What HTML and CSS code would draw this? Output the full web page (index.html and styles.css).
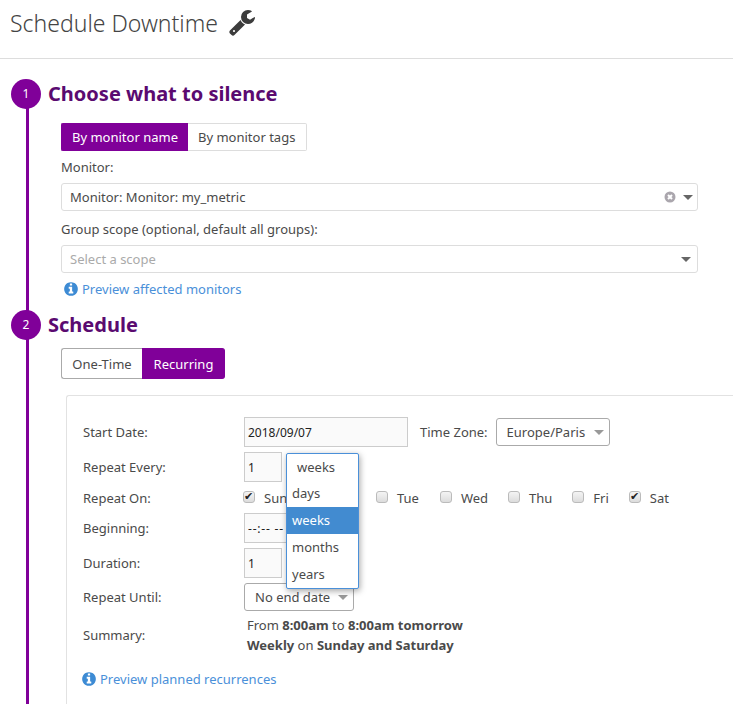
FILE: index.html

```html
<!DOCTYPE html>
<html lang="en">
<head>
  <meta charset="UTF-8" />
  <title>Schedule Downtime</title>
  <link rel="stylesheet" href="styles.css">
</head>
<body>
<div class="page">
  <header class="top">
    <h1>Schedule Downtime</h1>
    <svg class="wrench" viewBox="0 0 1792 1792"><path d="M448 1472q0-26-19-45t-45-19-45 19-19 45 19 45 45 19 45-19 19-45zm644-420l-682 682q-37 37-90 37-52 0-91-37l-106-108q-38-36-38-90 0-53 38-91l681-681q39 98 114.5 173.5t173.5 114.5zm634-435q0 39-23 106-47 134-164.5 217.5t-258.5 83.5q-185 0-316.5-131.5t-131.5-316.5 131.5-316.5 316.5-131.5q58 0 121.5 16.5t107.5 46.5q16 11 16 28t-16 28l-293 169v224l193 107q5-3 79-48.5t135.5-81 70.5-35.5q15 0 23.5 10t8.5 25z"/></svg>
  </header>

  <main class="steps">
    <div class="rail"></div>

    <section class="step">
      <div class="step-head">
        <span class="num">1</span>
        <h2>Choose what to silence</h2>
      </div>
      <div class="step-body">
        <div class="toggle light">
          <button class="on">By monitor name</button>
          <button>By monitor tags</button>
        </div>
        <label class="field-label first">Monitor:</label>
        <div class="combo">
          <span>Monitor: Monitor: my_metric</span>
          <svg class="clear" viewBox="0 0 12 12"><circle cx="6" cy="6" r="5.5"/><path d="M4 4l4 4M8 4l-4 4"/></svg>
          <i class="caret dark"></i>
        </div>
        <label class="field-label">Group scope (optional, default all groups):</label>
        <div class="combo">
          <span class="placeholder">Select a scope</span>
          <i class="caret dark"></i>
        </div>
        <a class="preview nudge">
          <svg class="info" viewBox="0 0 1792 1792"><path d="M1152 1376v-160q0-14-9-23t-23-9h-96v-512q0-14-9-23t-23-9h-320q-14 0-23 9t-9 23v160q0 14 9 23t23 9h96v320h-96q-14 0-23 9t-9 23v160q0 14 9 23t23 9h448q14 0 23-9t9-23zm-128-896v-160q0-14-9-23t-23-9h-192q-14 0-23 9t-9 23v160q0 14 9 23t23 9h192q14 0 23-9t9-23zm640 416q0 209-103 385.5t-279.5 279.5-385.5 103-385.5-103-279.5-279.5-103-385.5 103-385.5 279.5-279.5 385.5-103 385.5 103 279.5 279.5 103 385.5z"/></svg>
          Preview affected monitors
        </a>
      </div>
    </section>

    <section class="step second">
      <div class="step-head">
        <span class="num">2</span>
        <h2>Schedule</h2>
      </div>
      <div class="step-body">
        <div class="toggle dark-edge">
          <button>One-Time</button>
          <button class="on">Recurring</button>
        </div>

        <div class="panel">
          <div class="row r-date">
            <label>Start Date:</label>
            <input class="txt date" type="text" value="2018/09/07">
            <label class="tz-label">Time Zone:</label>
            <div class="pick tz">Europe/Paris<i class="caret"></i></div>
          </div>
          <div class="row r-every">
            <label>Repeat Every:</label>
            <input class="txt small" type="text" value="1">
          </div>
          <div class="row r-days">
            <label>Repeat On:</label>
            <div class="days">
              <label class="day"><input type="checkbox" checked>Sun</label>
              <label class="day"><input type="checkbox">Mon</label>
              <label class="day"><input type="checkbox">Tue</label>
              <label class="day"><input type="checkbox">Wed</label>
              <label class="day"><input type="checkbox">Thu</label>
              <label class="day"><input type="checkbox">Fri</label>
              <label class="day"><input type="checkbox" checked>Sat</label>
            </div>
          </div>
          <div class="row">
            <label>Beginning:</label>
            <input class="txt time" type="text" value="--:-- --">
          </div>
          <div class="row">
            <label>Duration:</label>
            <input class="txt small" type="text" value="1">
          </div>
          <div class="row r-until">
            <label>Repeat Until:</label>
            <div class="pick until">No end date<i class="caret"></i></div>
          </div>
          <div class="row r-summary">
            <label>Summary:</label>
            <p>From <b>8:00am</b> to <b>8:00am tomorrow</b><br><b>Weekly</b> on <b>Sunday and Saturday</b></p>
          </div>
          <a class="preview planned">
            <svg class="info" viewBox="0 0 1792 1792"><path d="M1152 1376v-160q0-14-9-23t-23-9h-96v-512q0-14-9-23t-23-9h-320q-14 0-23 9t-9 23v160q0 14 9 23t23 9h96v320h-96q-14 0-23 9t-9 23v160q0 14 9 23t23 9h448q14 0 23-9t9-23zm-128-896v-160q0-14-9-23t-23-9h-192q-14 0-23 9t-9 23v160q0 14 9 23t23 9h192q14 0 23-9t9-23zm640 416q0 209-103 385.5t-279.5 279.5-385.5 103-385.5-103-279.5-279.5-103-385.5 103-385.5 279.5-279.5 385.5-103 385.5 103 279.5 279.5 103 385.5z"/></svg>
            Preview planned recurrences
          </a>

          <ul class="menu">
            <li class="current">weeks</li>
            <li>days</li>
            <li class="hover">weeks</li>
            <li>months</li>
            <li>years</li>
          </ul>
        </div>
      </div>
    </section>
  </main>
</div>
</body>
</html>
```

FILE: styles.css

```css
* {
  box-sizing: border-box;
}
html, body {
  margin: 0;
  padding: 0;
}
body {
  font-family: "Noto Sans", "Open Sans", sans-serif;
  font-size: 13px;
  color: #4a4a4a;
  background: #fff;
}
.page {
  height: 704px;
  overflow: hidden;
}
.top {
  height: 59px;
  padding: 8px 0 0 10px;
  display: flex;
  align-items: flex-start;
  border-bottom: 1px solid #ddd;
}
.top h1 {
  margin: 0;
  font-size: 23px;
  line-height: 31px;
  font-weight: 300;
  color: #444;
}
.wrench {
  width: 28px;
  height: 28px;
  margin: 0 0 0 10px;
  fill: #3c3c3c;
}

/* steps */
.steps {
  position: relative;
  padding: 20px 0 0 11px;
}
.rail {
  position: absolute;
  left: 26px;
  top: 40px;
  bottom: 0;
  width: 3px;
  background: #800099;
}
.step-head {
  position: relative;
  display: flex;
  align-items: center;
  height: 30px;
}
.num {
  width: 30px;
  height: 30px;
  border-radius: 50%;
  background: #800099;
  color: #fff;
  font-size: 12px;
  line-height: 30px;
  text-align: center;
}
.step-head h2 {
  margin: 0 0 0 7px;
  font-size: 20px;
  line-height: 30px;
  font-weight: 700;
  color: #5a0a70;
}
.step-body {
  padding: 14px 35px 0 50px;
}
.second {
  margin-top: 12px;
}
.second .step-body {
  padding-top: 8px;
  padding-right: 0;
}

/* toggles */
.toggle {
  display: inline-flex;
  vertical-align: top;
}
.toggle button {
  font: inherit;
  height: 28px;
  padding: 0 10px;
  border: 1px solid #ddd;
  background: #fff;
  color: #4a4a4a;
}
.toggle button:first-child {
  border-right: 0;
  border-radius: 2px 0 0 2px;
}
.toggle button:last-child {
  border-left: 0;
  padding-right: 11px;
  border-radius: 0 2px 2px 0;
}
.toggle button.on {
  background: #800099;
  border-color: #800099;
  color: #fff;
}
.toggle.dark-edge button {
  width: 81px;
  height: 31px;
  border-color: #aaa;
  border-radius: 3px 0 0 3px;
}
.toggle.dark-edge button.on {
  width: 83px;
  padding: 0 0 0 1px;
  border-color: #800099;
  border-radius: 0 3px 3px 0;
}

/* select2-ish combos */
.field-label {
  display: block;
  height: 18px;
  line-height: 18px;
  margin: 9px 0 7px;
}
.field-label.first {
  margin-top: 7px;
}
.combo {
  position: relative;
  display: flex;
  align-items: center;
  height: 28px;
  padding: 0 8px;
  border: 1px solid #ddd;
  border-radius: 3px;
}
.combo span {
  flex: 1;
}
.placeholder {
  color: #aaa;
}
.clear {
  width: 12px;
  height: 12px;
  margin-right: 7px;
}
.clear circle {
  fill: #aaa6ad;
}
.clear path {
  stroke: #fff;
  stroke-width: 2;
}
.caret {
  display: block;
  width: 0;
  height: 0;
  border-left: 5px solid transparent;
  border-right: 5px solid transparent;
  border-top: 5px solid #999;
}
.caret.dark {
  border-top-color: #666;
}
.combo .caret {
  margin-right: -2px;
}
.combo .clear + .caret {
  margin-right: -4px;
}

/* links */
.preview {
  display: flex;
  align-items: center;
  color: #4a90d9;
  height: 18px;
}
.info {
  width: 16px;
  height: 16px;
  fill: #3d8bd4;
  margin-right: 3px;
}
.nudge {
  margin: 7px 0 0 2px;
}

/* recurring panel */
.panel {
  position: relative;
  margin: 16px 0 0 5px;
  padding: 21px 0 0 16px;
  height: 400px;
  border-left: 1px solid #e2e2e2;
  border-top: 1px solid #e2e2e2;
  border-top-left-radius: 3px;
}
.row {
  display: flex;
  align-items: center;
  min-height: 30px;
  margin-bottom: 5px;
}
.row > label:first-child {
  width: 161px;
  flex: none;
}
.txt {
  font: inherit;
  font-size: 12px;
  height: 30px;
  padding: 0 3px;
  border: 1px solid #ccc;
  background: #fafafa;
  color: #222;
}
.date {
  width: 164px;
}
.small {
  width: 38px;
}
.time {
  width: 110px;
  letter-spacing: 0.8px;
}
.tz-label {
  margin-left: 12px;
}
.pick {
  display: flex;
  align-items: center;
  justify-content: space-between;
  height: 28px;
  padding: 0 5px 0 10px;
  border: 1px solid #aaa;
  border-radius: 3px;
}
.tz {
  width: 114px;
  margin-left: 8px;
}
.until {
  width: 110px;
}
.r-every {
  margin-bottom: 0;
}
.r-days {
  margin: 0;
  min-height: 31px;
}
.days {
  display: flex;
  margin-left: -1px;
}
.day {
  display: flex;
  align-items: center;
  margin-right: 20px;
}
.day:nth-child(3) {
  margin-right: 21px;
}
.day input {
  appearance: none;
  position: relative;
  width: 12px;
  height: 12px;
  margin: -2px 9px 0 0;
  border: 1px solid #bbb;
  border-radius: 3px;
  background: linear-gradient(#f4f4f4, #dcdcdc);
}
.day input:checked::after {
  content: "✔";
  position: absolute;
  left: 0;
  top: -3px;
  font-size: 11px;
  line-height: 14px;
  color: #222;
}
.r-until {
  min-height: 28px;
  margin-bottom: 4px;
}
.r-summary p {
  margin: 0 0 0 3px;
  line-height: 20px;
}
.r-summary {
  margin-bottom: 0;
}
.planned {
  margin: 15px 0 0 -2px;
}

/* open dropdown of the repeat unit */
.menu {
  position: absolute;
  left: 219px;
  top: 57px;
  width: 73px;
  margin: 0;
  padding: 0;
  list-style: none;
  background: #fff;
  border: 1px solid #4a90d9;
  border-radius: 2px;
  box-shadow: 1px 2px 6px rgba(0, 0, 0, 0.35);
}
.menu li {
  height: 27px;
  line-height: 27px;
  padding-left: 5px;
}
.menu li.current {
  height: 26px;
  padding-left: 10px;
}
.menu li.hover {
  background: #428bd0;
  color: #fff;
}
```
